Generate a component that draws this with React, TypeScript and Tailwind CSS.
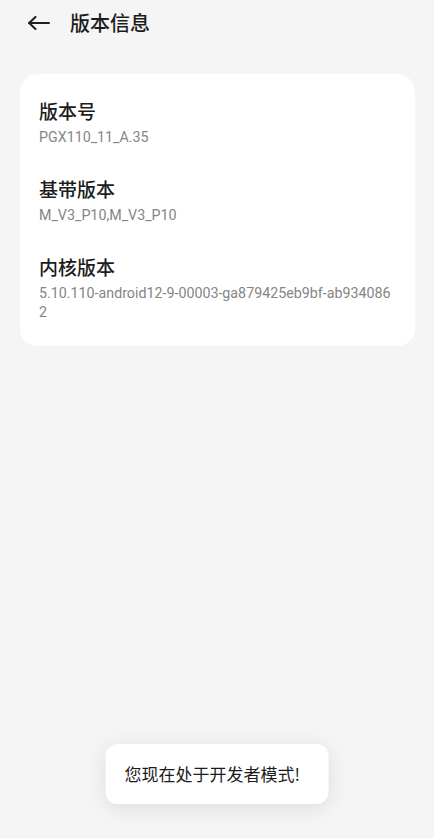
import React from "react";

const font = { fontFamily: '"Noto Sans CJK SC", Roboto, sans-serif' };

function Item({ title, lines }: { title: string; lines: string[] }) {
  return (
    <div className="flex flex-col gap-[4px]">
      <div className="text-[19px] leading-[26px] font-medium text-[#1c1c1c]">{title}</div>
      <div className="text-[14.25px] leading-[19px] text-[#858585]" style={{ fontFamily: 'Roboto, "Noto Sans CJK SC", sans-serif' }}>
        {lines.map((l, i) => (
          <div key={i}>{l}</div>
        ))}
      </div>
    </div>
  );
}

export default function App() {
  return (
    <div className="relative min-h-[838px] w-full bg-[#f5f5f5]" style={font}>
      <div className="flex h-[46px] items-center">
        <div className="flex w-[70px] items-center pl-[28px]">
          <svg width="22" height="14" viewBox="0 0 22 14" fill="none">
            <path d="M1 7H21" stroke="#1f1f1f" strokeWidth="2" strokeLinecap="round" />
            <path d="M7.5 1L1.2 7L7.5 13" stroke="#1f1f1f" strokeWidth="2" strokeLinecap="round" strokeLinejoin="round" />
          </svg>
        </div>
        <div className="text-[20px] leading-[28px] font-medium text-[#1c1c1c]">版本信息</div>
      </div>
      <div className="ml-[20px] mr-[19px] mt-[28px] flex flex-col gap-[29px] rounded-[18px] bg-white px-[19px] pt-[24px] pb-[24px]">
        <Item title="版本号" lines={["PGX110_11_A.35"]} />
        <Item title="基带版本" lines={["M_V3_P10,M_V3_P10"]} />
        <Item title="内核版本" lines={["5.10.110-android12-9-00003-ga879425eb9bf-ab934086", "2"]} />
      </div>
      <div className="absolute bottom-[34px] left-1/2 flex h-[60px] w-[223px] -translate-x-1/2 items-center rounded-[12px] bg-white pl-[19px] shadow-[0_4px_22px_rgba(0,0,0,0.10)]">
        <span className="text-[17px] leading-[24px] text-[#1c1c1c]">您现在处于开发者模式!</span>
      </div>
    </div>
  );
}
